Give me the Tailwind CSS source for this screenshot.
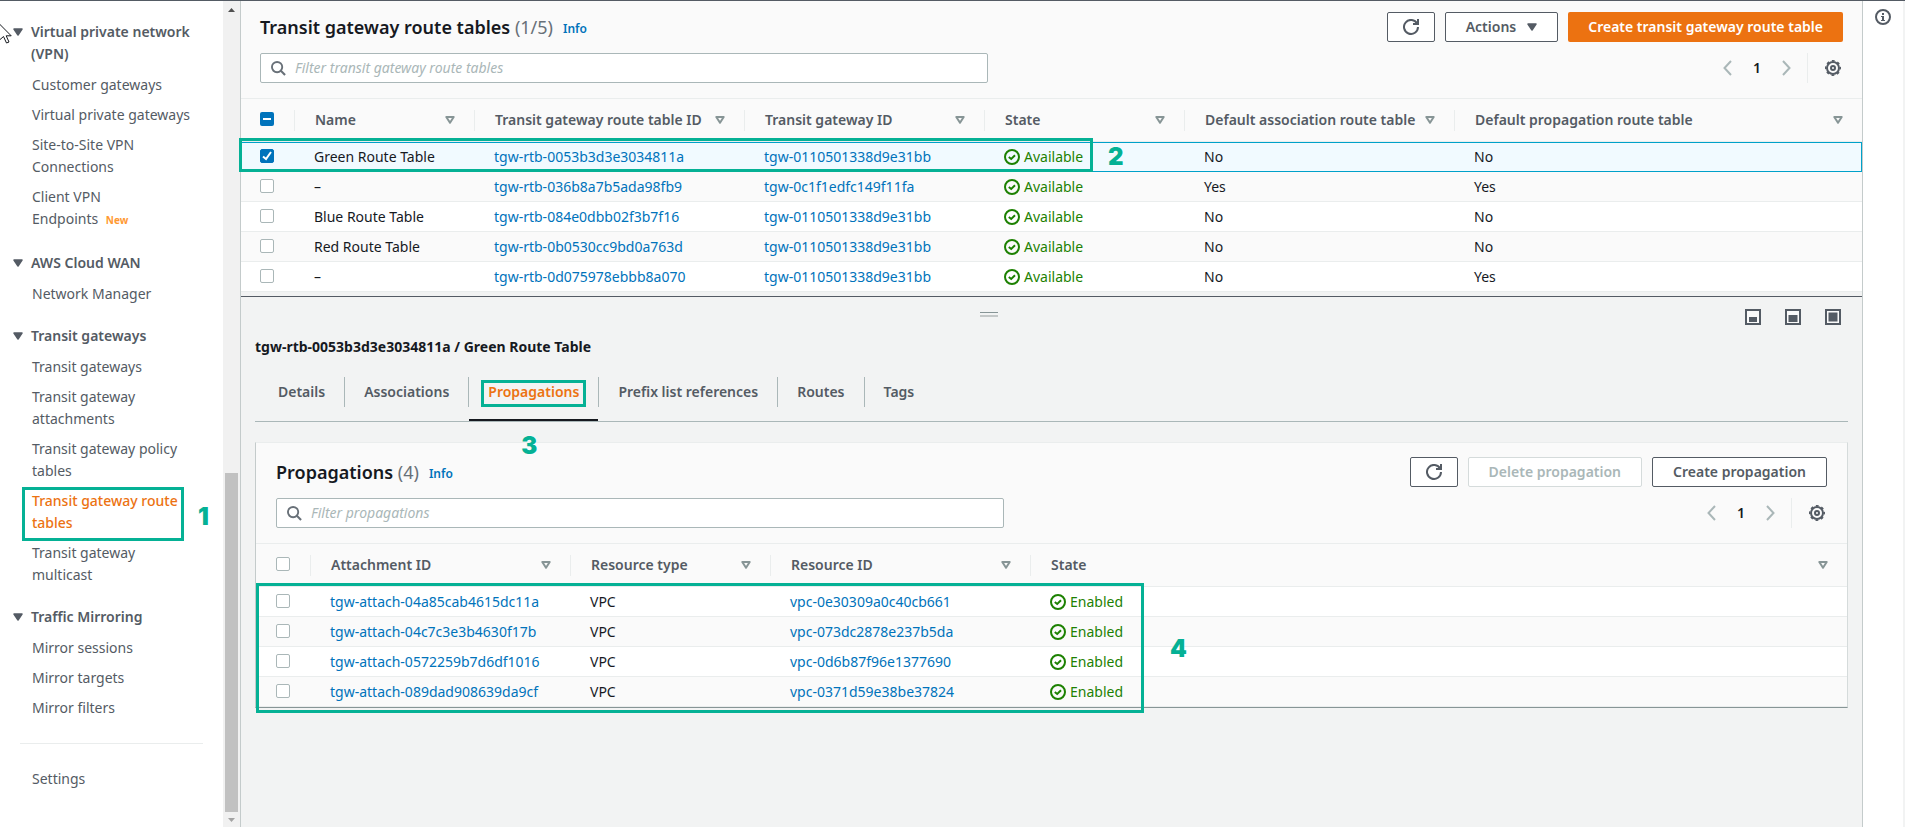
<!DOCTYPE html>
<html lang="en">
<head>
  <meta charset="UTF-8" />
  <meta name="viewport" content="width=device-width, initial-scale=1.0" />
  <title>Transit gateway route tables | VPC</title>
  <script src="https://cdn.jsdelivr.net/npm/@tailwindcss/browser@4"></script>
</head>
<body class="bg-white font-['Noto_Sans','Open_Sans',sans-serif] text-sm text-[#16191f]">

  <!-- Icon sprite --------------------------------------------->
  <svg class="hidden">
    <symbol id="search" viewBox="0 0 16 16"><circle cx="6.5" cy="6.5" r="5.5" fill="none" stroke="currentColor" stroke-width="2" /><path d="M10.5 10.5 15 15" stroke="currentColor" stroke-width="2.2" /></symbol>
    <symbol id="refresh" viewBox="0 0 16 16"><path d="M10 5h5V0M15 8a7 7 0 1 1-.8-3.3" fill="none" stroke="currentColor" stroke-width="2" /></symbol>
    <symbol id="caret" viewBox="0 0 10 8"><path d="M1 1h8L5 7z" fill="currentColor" stroke="currentColor" stroke-width="1.5" stroke-linejoin="round" /></symbol>
    <symbol id="sort" viewBox="0 0 10 8"><path d="M1.3 1h7.4L5 6.8z" fill="none" stroke="currentColor" stroke-width="2" stroke-linejoin="round" /></symbol>
    <symbol id="prev" viewBox="0 0 9 16"><path d="M8 1 1.5 8 8 15" fill="none" stroke="currentColor" stroke-width="2" /></symbol>
    <symbol id="next" viewBox="0 0 9 16"><path d="M1 1l6.5 7L1 15" fill="none" stroke="currentColor" stroke-width="2" /></symbol>
    <symbol id="gear" viewBox="0 0 16 16"><circle cx="8" cy="8" r="6" fill="none" stroke="currentColor" stroke-width="2" /><circle cx="8" cy="8" r="7.3" fill="none" stroke="currentColor" stroke-width="1.4" stroke-dasharray="2.87 2.87" stroke-dashoffset="1.43" /><circle cx="8" cy="8" r="2" fill="none" stroke="currentColor" stroke-width="2" /></symbol>
    <symbol id="ok" viewBox="0 0 16 16"><circle cx="8" cy="8" r="7" fill="none" stroke="currentColor" stroke-width="2" /><path d="M4.800 8 7.200 10l3.800-3.800" fill="none" stroke="currentColor" stroke-width="2" /></symbol>
    <symbol id="info" viewBox="0 0 16 16"><circle cx="8" cy="8" r="7" fill="none" stroke="currentColor" stroke-width="2" /><path d="M7 4h2v2H7zM6 7h3v4h1v1H6v-1h1V8H6z" fill="currentColor" /></symbol>
  </svg>

  <div class="flex h-screen overflow-hidden border-t border-[#545b64]">

    <!-- Sidebar ----------------------------------------------->
    <nav class="relative w-[223px] shrink-0 pt-5 leading-[22px] text-[#545b64]">
      <div class="mb-5">
        <h2 class="relative mb-[9px] pr-4 pl-[31px] font-semibold"><svg class="absolute top-[7px] left-[13px] h-2 w-[10px]"><use href="#caret" /></svg>Virtual private network (VPN)</h2>
        <ul class="flex flex-col gap-2 pr-4 pl-8">
          <li><a href="#">Customer gateways</a></li>
          <li><a href="#">Virtual private gateways</a></li>
          <li><a href="#">Site-to-Site VPN<br />Connections</a></li>
          <li class="pb-px"><a href="#">Client VPN<br />Endpoints</a> <span class="ml-1 text-[10px] font-bold text-[#ff9933]">New</span></li>
        </ul>
      </div>
      <div class="mb-5">
        <h2 class="relative mb-[9px] pl-[31px] font-semibold"><svg class="absolute top-[7px] left-[13px] h-2 w-[10px]"><use href="#caret" /></svg>AWS Cloud WAN</h2>
        <ul class="pl-8">
          <li><a href="#">Network Manager</a></li>
        </ul>
      </div>
      <div class="mb-5">
        <h2 class="relative mb-[9px] pl-[31px] font-semibold"><svg class="absolute top-[7px] left-[13px] h-2 w-[10px]"><use href="#caret" /></svg>Transit gateways</h2>
        <ul class="flex flex-col gap-2 pl-8">
          <li><a href="#">Transit gateways</a></li>
          <li><a href="#">Transit gateway<br />attachments</a></li>
          <li><a href="#">Transit gateway policy<br />tables</a></li>
          <li class="relative">
            <a href="#" class="font-medium text-[#ec7211]">Transit gateway route<br />tables</a>
            <span class="absolute -top-[3px] -left-[10px] h-[54px] w-[162px] border-3 border-[#05b195]"></span>
            <span class="absolute top-3 left-[166px] font-[Inter] text-2xl leading-[30px] font-black text-[#05b195]">1</span>
          </li>
          <li><a href="#">Transit gateway<br />multicast</a></li>
        </ul>
      </div>
      <div>
        <h2 class="relative mb-[9px] pl-[31px] font-semibold"><svg class="absolute top-[7px] left-[13px] h-2 w-[10px]"><use href="#caret" /></svg>Traffic Mirroring</h2>
        <ul class="flex flex-col gap-2 pl-8">
          <li><a href="#">Mirror sessions</a></li>
          <li><a href="#">Mirror targets</a></li>
          <li><a href="#">Mirror filters</a></li>
        </ul>
      </div>
      <hr class="mx-5 my-6 border-[#eaeded]" />
      <a href="#" class="pl-8">Settings</a>
      <!-- mouse pointer -->
      <svg class="absolute top-[22px] left-0 h-[21px] w-3" viewBox="0 0 12 21"><path d="M-.5 1v16l4-3.500 3 6.500 2.500-1-2.800-6.200h5z" fill="#fff" stroke="#16191f" stroke-width="1" /></svg>
    </nav>

    <!-- Sidebar scrollbar ------------------------------------->
    <div class="flex w-[17px] shrink-0 flex-col items-center bg-[#f1f1f1]">
      <svg class="mt-[7px] h-1 w-[7px] text-[#505050]" viewBox="0 0 7 4"><path d="M3.500 0 7 4H0z" fill="currentColor" /></svg>
      <div class="mt-auto mb-[6px] h-[339px] w-[13px] bg-[#c1c1c1]"></div>
      <svg class="mb-[5px] h-1 w-[7px] text-[#a3a3a3]" viewBox="0 0 7 4"><path d="M0 0h7L3.500 4z" fill="currentColor" /></svg>
    </div>

    <!-- Main -------------------------------------------------->
    <main class="flex min-w-0 flex-1 flex-col border-x border-[#c4cbcb] bg-[#f2f3f3]">

      <!-- Route tables -->
      <section class="bg-[#fafafa]">
        <div class="flex flex-col gap-[11px] px-[19px] pt-[11px] pb-[15px]">
          <div class="flex items-center gap-[10px]">
            <h1 class="text-lg leading-[30px] font-semibold">Transit gateway route tables <span class="font-normal text-[#687078]">(1/5)</span></h1>
            <a href="#" class="pt-1 text-xs font-semibold text-[#0073bb]">Info</a>
            <button aria-label="Refresh" class="ml-auto flex h-[30px] w-12 items-center justify-center rounded-xs border border-[#545b64] bg-white text-[#545b64]"><svg class="size-4"><use href="#refresh" /></svg></button>
            <button class="flex h-[30px] items-center gap-[11px] rounded-xs border border-[#545b64] bg-white px-5 font-semibold text-[#545b64]">Actions <svg class="h-2 w-[10px]"><use href="#caret" /></svg></button>
            <button class="h-[30px] rounded-xs bg-[#ec7211] px-5 font-semibold text-white">Create transit gateway route table</button>
          </div>
          <div class="flex items-center">
            <label class="flex h-[30px] w-[728px] items-center gap-[9px] rounded-xs border border-[#aab7b8] bg-white px-[10px] text-[#687078]">
              <svg class="size-[15px] shrink-0"><use href="#search" /></svg>
              <input type="text" aria-label="Filter transit gateway route tables" placeholder="Filter transit gateway route tables" class="w-full outline-none placeholder:text-[#aab7b8] placeholder:italic" />
            </label>
            <div class="ml-auto flex items-center text-[#aab7b8]">
              <button aria-label="Previous page" class="mr-5"><svg class="h-4 w-[9px]"><use href="#prev" /></svg></button>
              <span class="w-[10px] text-center font-semibold text-[#16191f]">1</span>
              <button aria-label="Next page" class="mr-4 ml-5"><svg class="h-4 w-[9px]"><use href="#next" /></svg></button>
              <button aria-label="Preferences" class="flex h-[30px] items-center border-l border-[#eaeded] pr-[2px] pl-[17px] text-[#545b64]"><svg class="size-4"><use href="#gear" /></svg></button>
            </div>
          </div>
        </div>

        <div class="relative">
          <table class="w-full table-fixed border-separate border-spacing-0 border-t border-[#eaeded]">
            <colgroup>
              <col class="w-[53px]" /><col class="w-[180px]" /><col class="w-[270px]" /><col class="w-[240px]" /><col class="w-[200px]" /><col class="w-[270px]" /><col />
            </colgroup>
            <thead class="text-left text-[#545b64] [&_th]:h-[43px] [&_th]:border-b [&_th]:border-[#eaeded] [&_th]:font-semibold [&_th>div]:flex [&_th>div]:h-[21px] [&_th>div]:items-center [&_th>div]:justify-between [&_th>div]:border-l [&_th>div]:border-[#eaeded] [&_th>div]:pr-[19px] [&_th>div]:pl-5 [&_svg]:h-2 [&_svg]:w-[10px] [&_svg]:text-[#879596]">
              <tr>
                <th class="pb-0.5 pl-[19px]"><span class="relative block size-[14px]"><input type="checkbox" aria-label="Select all" checked class="block size-[14px] appearance-none rounded-xs bg-[#0073bb]" /><span class="absolute top-[6px] left-[3px] h-[2px] w-2 bg-white"></span></span></th>
                <th><div>Name <svg><use href="#sort" /></svg></div></th>
                <th><div>Transit gateway route table ID <svg><use href="#sort" /></svg></div></th>
                <th><div>Transit gateway ID <svg><use href="#sort" /></svg></div></th>
                <th><div>State <svg><use href="#sort" /></svg></div></th>
                <th><div>Default association route table <svg><use href="#sort" /></svg></div></th>
                <th><div>Default propagation route table <svg><use href="#sort" /></svg></div></th>
              </tr>
            </thead>
            <tbody class="[&_a]:text-[#0073bb] [&_input]:block [&_input]:size-[14px] [&_input]:appearance-none [&_input]:rounded-xs [&_input]:border [&_input]:border-[#aab7b8] [&_input]:bg-white [&_td]:h-[30px] [&_td]:border-b [&_td]:border-[#eaeded] [&_td]:pl-5 [&_td:first-child]:pb-0.5 [&_td:first-child]:pl-[19px] [&_tr]:bg-white [&_tr:nth-child(even)]:bg-[#fafafa]">
              <tr class="bg-[#f1faff]! [&_td]:border-y! [&_td]:border-[#00a1c9]! [&_td:last-child]:border-r">
                <td><span class="relative block size-[14px]"><input type="checkbox" aria-label="Select Green Route Table" checked class="border-[#0073bb]! bg-[#0073bb]!" /><svg class="pointer-events-none absolute top-0 left-0 size-[14px]" viewBox="0 0 14 14"><path d="M3 7.500 6 10l5-7" fill="none" stroke="#fff" stroke-width="2" /></svg></span></td>
                <td>Green Route Table</td>
                <td><a href="#">tgw-rtb-0053b3d3e3034811a</a></td>
                <td><a href="#">tgw-0110501338d9e31bb</a></td>
                <td><span class="flex items-center gap-1 text-[#1d8102]"><svg class="size-4"><use href="#ok" /></svg>Available</span></td>
                <td>No</td>
                <td>No</td>
              </tr>
              <tr>
                <td><input type="checkbox" aria-label="Select tgw-rtb-036b8a7b5ada98fb9" /></td>
                <td>–</td>
                <td><a href="#">tgw-rtb-036b8a7b5ada98fb9</a></td>
                <td><a href="#">tgw-0c1f1edfc149f11fa</a></td>
                <td><span class="flex items-center gap-1 text-[#1d8102]"><svg class="size-4"><use href="#ok" /></svg>Available</span></td>
                <td>Yes</td>
                <td>Yes</td>
              </tr>
              <tr>
                <td><input type="checkbox" aria-label="Select Blue Route Table" /></td>
                <td>Blue Route Table</td>
                <td><a href="#">tgw-rtb-084e0dbb02f3b7f16</a></td>
                <td><a href="#">tgw-0110501338d9e31bb</a></td>
                <td><span class="flex items-center gap-1 text-[#1d8102]"><svg class="size-4"><use href="#ok" /></svg>Available</span></td>
                <td>No</td>
                <td>No</td>
              </tr>
              <tr>
                <td><input type="checkbox" aria-label="Select Red Route Table" /></td>
                <td>Red Route Table</td>
                <td><a href="#">tgw-rtb-0b0530cc9bd0a763d</a></td>
                <td><a href="#">tgw-0110501338d9e31bb</a></td>
                <td><span class="flex items-center gap-1 text-[#1d8102]"><svg class="size-4"><use href="#ok" /></svg>Available</span></td>
                <td>No</td>
                <td>No</td>
              </tr>
              <tr>
                <td><input type="checkbox" aria-label="Select tgw-rtb-0d075978ebbb8a070" /></td>
                <td>–</td>
                <td><a href="#">tgw-rtb-0d075978ebbb8a070</a></td>
                <td><a href="#">tgw-0110501338d9e31bb</a></td>
                <td><span class="flex items-center gap-1 text-[#1d8102]"><svg class="size-4"><use href="#ok" /></svg>Available</span></td>
                <td>No</td>
                <td>Yes</td>
              </tr>
            </tbody>
          </table>
          <span class="absolute top-10 -left-[2px] h-[34px] w-[854px] border-3 border-[#05b195]"></span>
          <span class="absolute top-11 left-[867px] font-[Inter] text-2xl leading-[30px] font-black text-[#05b195] [text-shadow:0_0_2px_#fff]">2</span>
        </div>
      </section>

      <!-- Split panel -->
      <section class="relative mt-1 flex-1 border-t border-[#545b64] px-[14px] pt-3">
        <span class="absolute top-[15px] left-1/2 -ml-[72px] h-[5px] w-[18px] border-t border-b-2 border-t-[#879596] border-b-[#c4c8c8]"></span>
        <div class="flex h-4 justify-end gap-6 pr-[7px] text-[#545b64]">
          <button aria-label="Small panel"><svg class="size-4" viewBox="0 0 16 16"><path d="M1 1h14v14H1z" fill="#fafafa" stroke="currentColor" stroke-width="2" /><path d="M4 8h8v5H4z" fill="currentColor" /></svg></button>
          <button aria-label="Medium panel"><svg class="size-4" viewBox="0 0 16 16"><path d="M1 1h14v14H1z" fill="#fafafa" stroke="currentColor" stroke-width="2" /><path d="M3.500 6h9v7h-9z" fill="currentColor" /></svg></button>
          <button aria-label="Full panel"><svg class="size-4" viewBox="0 0 16 16"><path d="M1 1h14v14H1z" fill="#fafafa" stroke="currentColor" stroke-width="2" /><path d="M3.500 3.500h9v9h-9z" fill="currentColor" /></svg></button>
        </div>
        <h2 class="mt-[11px] leading-[22px] font-bold">tgw-rtb-0053b3d3e3034811a / Green Route Table</h2>

        <div class="mt-[19px] flex h-[45px] border-b border-[#aab7b8] pl-1 font-semibold text-[#545b64] [&>button]:h-[30px] [&>button]:border-r [&>button]:border-[#aab7b8] [&>button]:px-[19px] [&>button:last-child]:border-r-0">
          <button>Details</button>
          <button>Associations</button>
          <button class="relative text-[#ec7211]">Propagations
            <span class="absolute top-[42px] left-0 h-[2px] w-full bg-[#16191f]"></span>
            <span class="absolute inset-x-[12px] top-[3px] h-[27px] border-3 border-[#05b195]"></span>
            <span class="absolute top-[54px] left-[52px] z-10 font-[Inter] text-2xl leading-[30px] font-black text-[#05b195] [text-shadow:0_0_2px_#fff]">3</span>
          </button>
          <button>Prefix list references</button>
          <button>Routes</button>
          <button>Tags</button>
        </div>

        <div class="mt-5 border border-t-[#eaeded] border-r-[#d5dbdb] border-b-[#879596] border-l-[#c4cbcb] bg-[#fafafa]">
          <div class="flex flex-col gap-[11px] px-5 pt-[14px] pb-[15px]">
            <div class="flex items-center gap-[10px]">
              <h2 class="text-lg leading-[30px] font-semibold">Propagations <span class="font-normal text-[#687078]">(4)</span></h2>
              <a href="#" class="pt-1 text-xs font-semibold text-[#0073bb]">Info</a>
              <button aria-label="Refresh" class="ml-auto flex h-[30px] w-12 items-center justify-center rounded-xs border border-[#545b64] bg-white text-[#545b64]"><svg class="size-4"><use href="#refresh" /></svg></button>
              <button disabled class="h-[30px] rounded-xs border border-[#d5dbdb] bg-white px-5 font-semibold text-[#aab7b8]">Delete propagation</button>
              <button class="h-[30px] rounded-xs border border-[#545b64] bg-white px-5 font-semibold text-[#545b64]">Create propagation</button>
            </div>
            <div class="flex items-center">
              <label class="flex h-[30px] w-[728px] items-center gap-[9px] rounded-xs border border-[#aab7b8] bg-white px-[10px] text-[#687078]">
                <svg class="size-[15px] shrink-0"><use href="#search" /></svg>
                <input type="text" aria-label="Filter propagations" placeholder="Filter propagations" class="w-full outline-none placeholder:text-[#aab7b8] placeholder:italic" />
              </label>
              <div class="ml-auto flex items-center text-[#aab7b8]">
                <button aria-label="Previous page" class="mr-5"><svg class="h-4 w-[9px]"><use href="#prev" /></svg></button>
                <span class="w-[10px] text-center font-semibold text-[#16191f]">1</span>
                <button aria-label="Next page" class="mr-4 ml-5"><svg class="h-4 w-[9px]"><use href="#next" /></svg></button>
                <button aria-label="Preferences" class="flex h-[30px] items-center border-l border-[#eaeded] pr-[2px] pl-[17px] text-[#545b64]"><svg class="size-4"><use href="#gear" /></svg></button>
              </div>
            </div>
          </div>

          <div class="relative">
            <table class="w-full table-fixed border-separate border-spacing-0 border-t border-[#eaeded]">
              <colgroup>
                <col class="w-[54px]" /><col class="w-[260px]" /><col class="w-[200px]" /><col class="w-[260px]" /><col />
              </colgroup>
              <thead class="text-left text-[#545b64] [&_th]:h-[43px] [&_th]:border-b [&_th]:border-[#eaeded] [&_th]:font-semibold [&_th>div]:flex [&_th>div]:h-[21px] [&_th>div]:items-center [&_th>div]:justify-between [&_th>div]:border-l [&_th>div]:border-[#eaeded] [&_th>div]:pr-[19px] [&_th>div]:pl-5 [&_svg]:h-2 [&_svg]:w-[10px] [&_svg]:text-[#879596]">
                <tr>
                  <th class="pb-0.5 pl-5"><input type="checkbox" aria-label="Select all propagations" class="block size-[14px] appearance-none rounded-xs border border-[#aab7b8] bg-white" /></th>
                  <th><div>Attachment ID <svg><use href="#sort" /></svg></div></th>
                  <th><div>Resource type <svg><use href="#sort" /></svg></div></th>
                  <th><div>Resource ID <svg><use href="#sort" /></svg></div></th>
                  <th><div>State <svg><use href="#sort" /></svg></div></th>
                </tr>
              </thead>
              <tbody class="[&_a]:text-[#0073bb] [&_input]:block [&_input]:size-[14px] [&_input]:appearance-none [&_input]:rounded-xs [&_input]:border [&_input]:border-[#aab7b8] [&_input]:bg-white [&_td]:h-[30px] [&_td]:border-b [&_td]:border-[#eaeded] [&_td]:pl-5 [&_td:first-child]:pb-0.5 [&_tr]:bg-white [&_tr:nth-child(even)]:bg-[#fafafa]">
                <tr>
                  <td><input type="checkbox" aria-label="Select tgw-attach-04a85cab4615dc11a" /></td>
                  <td><a href="#">tgw-attach-04a85cab4615dc11a</a></td>
                  <td>VPC</td>
                  <td><a href="#">vpc-0e30309a0c40cb661</a></td>
                  <td><span class="flex items-center gap-1 text-[#1d8102]"><svg class="size-4"><use href="#ok" /></svg>Enabled</span></td>
                </tr>
                <tr>
                  <td><input type="checkbox" aria-label="Select tgw-attach-04c7c3e3b4630f17b" /></td>
                  <td><a href="#">tgw-attach-04c7c3e3b4630f17b</a></td>
                  <td>VPC</td>
                  <td><a href="#">vpc-073dc2878e237b5da</a></td>
                  <td><span class="flex items-center gap-1 text-[#1d8102]"><svg class="size-4"><use href="#ok" /></svg>Enabled</span></td>
                </tr>
                <tr>
                  <td><input type="checkbox" aria-label="Select tgw-attach-0572259b7d6df1016" /></td>
                  <td><a href="#">tgw-attach-0572259b7d6df1016</a></td>
                  <td>VPC</td>
                  <td><a href="#">vpc-0d6b87f96e1377690</a></td>
                  <td><span class="flex items-center gap-1 text-[#1d8102]"><svg class="size-4"><use href="#ok" /></svg>Enabled</span></td>
                </tr>
                <tr>
                  <td><input type="checkbox" aria-label="Select tgw-attach-089dad908639da9cf" /></td>
                  <td><a href="#">tgw-attach-089dad908639da9cf</a></td>
                  <td>VPC</td>
                  <td><a href="#">vpc-0371d59e38be37824</a></td>
                  <td><span class="flex items-center gap-1 text-[#1d8102]"><svg class="size-4"><use href="#ok" /></svg>Enabled</span></td>
                </tr>
              </tbody>
            </table>
            <span class="absolute top-10 left-0 h-[130px] w-[888px] border-3 border-[#05b195]"></span>
            <span class="absolute top-[91px] left-[914px] font-[Inter] text-2xl leading-[30px] font-black text-[#05b195] [text-shadow:0_0_2px_#fff]">4</span>
          </div>
        </div>
      </section>
    </main>

    <!-- Help rail --------------------------------------------->
    <aside class="w-[42px] shrink-0 border-r-2 border-[#f2f3f3] pt-2 pl-3">
      <button aria-label="Open help panel" class="text-[#545b64]"><svg class="size-4"><use href="#info" /></svg></button>
    </aside>
  </div>
</body>
</html>
